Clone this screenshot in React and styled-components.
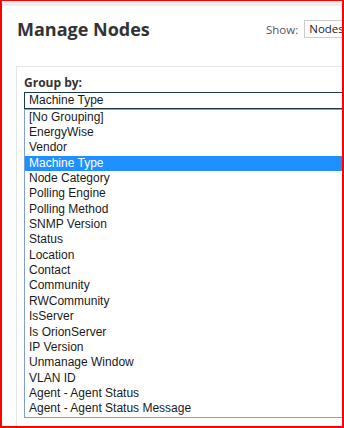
import styled, { createGlobalStyle } from 'styled-components';

const GlobalStyle = createGlobalStyle`
  html, body {
    margin: 0;
    padding: 0;
    background: #ffffff;
  }
`;

const Frame = styled.div`
  width: 344px;
  height: 428px;
  box-sizing: border-box;
  border-style: solid;
  border-color: #ff0000;
  border-width: 1px 2px 2px 2px;
  overflow: hidden;
  background: #ffffff;
`;

const TopStrip = styled.div`
  height: 5px;
  background: #eeeeee;
`;

const Header = styled.header`
  display: grid;
  grid-template-columns: 249px auto;
  align-items: center;
  margin: 11px 0 0 15px;
  width: 400px;
`;

const Title = styled.h1`
  margin: 0;
  font-family: 'Open Sans', 'Liberation Sans', sans-serif;
  font-size: 18px;
  line-height: 24px;
  font-weight: 700;
  color: #333333;
  white-space: nowrap;
`;

const ShowGroup = styled.div`
  display: flex;
  align-items: center;
  gap: 6px;
`;

const ShowLabel = styled.span`
  font-family: 'Open Sans', 'Liberation Sans', sans-serif;
  font-size: 11.5px;
  color: #555555;
`;

const ShowSelect = styled.div`
  box-sizing: border-box;
  height: 18px;
  width: 90px;
  padding-left: 4px;
  border: 1px solid #cccccc;
  font-family: 'Open Sans', 'Liberation Sans', sans-serif;
  font-size: 11.5px;
  line-height: 16px;
  color: #222222;
`;

const Panel = styled.section`
  margin: 25px 0 0 14px;
  width: 420px;
  height: 400px;
  border-top: 1px solid #e6e6e6;
  border-left: 1px solid #e6e6e6;
  padding: 8px 0 0 7px;
`;

const Label = styled.div`
  font-family: 'Open Sans', 'Liberation Sans', sans-serif;
  font-size: 12px;
  line-height: 16px;
  font-weight: 700;
  color: #333333;
`;

const ClosedSelect = styled.div`
  box-sizing: border-box;
  margin-top: 1px;
  height: 16.5px;
  width: 400px;
  padding-left: 4px;
  border: 1px solid #1d3a4a;
  font-family: 'Liberation Sans', Arial, sans-serif;
  font-size: 12px;
  line-height: 14.5px;
  color: #1a1a1a;
`;

const OptionList = styled.ul`
  list-style: none;
  margin: 0;
  padding: 0;
  width: 400px;
  border: 1px solid #7c9fd6;
`;

const Option = styled.li`
  height: 15.37px;
  line-height: 15.37px;
  padding-left: 4px;
  font-family: 'Liberation Sans', Arial, sans-serif;
  font-size: 12px;
  white-space: nowrap;
  color: ${(p) => (p.$selected ? '#ffffff' : '#1a1a1a')};
  background: ${(p) => (p.$selected ? '#1e90ff' : 'transparent')};
`;

const options = [
  '[No Grouping]',
  'EnergyWise',
  'Vendor',
  'Machine Type',
  'Node Category',
  'Polling Engine',
  'Polling Method',
  'SNMP Version',
  'Status',
  'Location',
  'Contact',
  'Community',
  'RWCommunity',
  'IsServer',
  'Is OrionServer',
  'IP Version',
  'Unmanage Window',
  'VLAN ID',
  'Agent - Agent Status',
  'Agent - Agent Status Message',
];

const App = () => {
  const selected = 'Machine Type';

  return (
    <>
      <GlobalStyle />
      <Frame>
        <TopStrip />
        <Header>
          <Title>Manage Nodes</Title>
          <ShowGroup>
            <ShowLabel>Show:</ShowLabel>
            <ShowSelect>Nodes</ShowSelect>
          </ShowGroup>
        </Header>
        <Panel>
          <Label>Group by:</Label>
          <ClosedSelect>{selected}</ClosedSelect>
          <OptionList>
            {options.map((o) => (
              <Option key={o} $selected={o === selected}>
                {o}
              </Option>
            ))}
          </OptionList>
        </Panel>
      </Frame>
    </>
  );
};

export default App;
